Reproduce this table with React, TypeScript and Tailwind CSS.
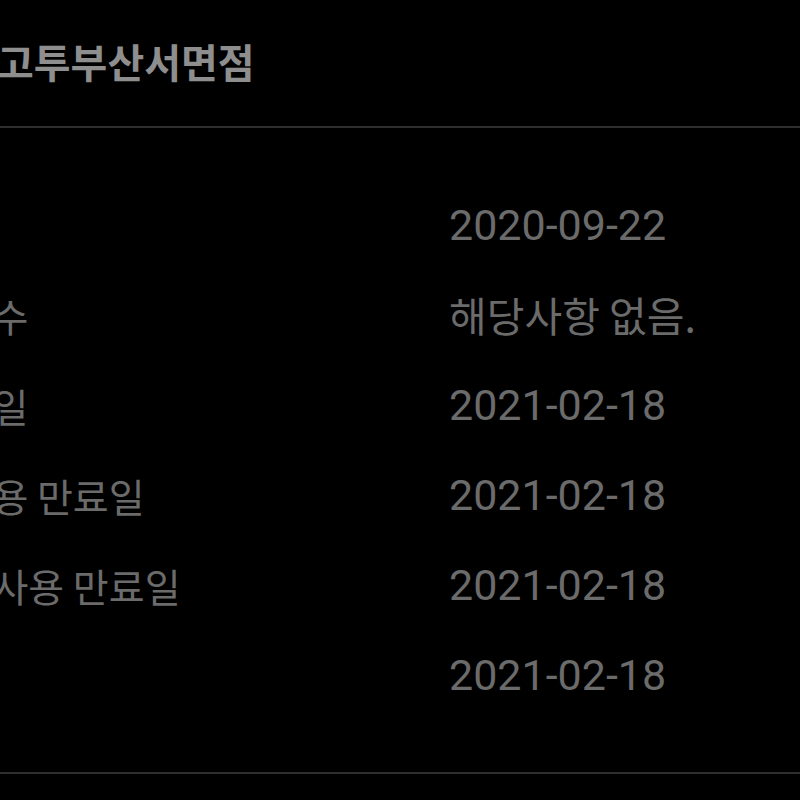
const rows = [
  { label: '시작일', value: '2020-09-22' },
  { label: '잔여 횟수', value: '해당사항 없음.' },
  { label: '납부 기일', value: '2021-02-18' },
  { label: '락커 사용 만료일', value: '2021-02-18' },
  { label: '운동복 사용 만료일', value: '2021-02-18' },
  { label: '만기일', value: '2021-02-18' },
]

function isDate(v: string) {
  return /^\d{4}-\d{2}-\d{2}$/.test(v)
}

export default function App() {
  return (
    <div className="w-[800px] h-[800px] bg-black overflow-hidden font-['Roboto','Noto_Sans_CJK_KR',sans-serif]">
      <div className="h-[128px] border-b-2 border-[#2f2f2f] pt-[35px]">
        <h1 className="-ml-[3px] whitespace-nowrap text-[40px] leading-[52px] font-bold text-[#8e8e8e] font-['Noto_Sans_CJK_KR',sans-serif]">
          고투부산서면점
        </h1>
      </div>

      <div className="py-[52px] border-b-2 border-[#2f2f2f]">
        {rows.map((row, i) => (
          <div key={i} className="flex items-center h-[90px]">
            <div className="w-[449px] shrink-0">
              <span className="block -ml-[124px] whitespace-nowrap text-[39px] text-[#6b6b6b] font-['Noto_Sans_CJK_KR',sans-serif]">
                {row.label}
              </span>
            </div>
            {isDate(row.value) ? (
              <span className="whitespace-nowrap text-[43px] text-[#6b6b6b] font-['Roboto',sans-serif]">
                {row.value}
              </span>
            ) : (
              <span className="whitespace-nowrap text-[41px] text-[#6b6b6b] font-['Noto_Sans_CJK_KR',sans-serif]">
                {row.value}
              </span>
            )}
          </div>
        ))}
      </div>
    </div>
  )
}
